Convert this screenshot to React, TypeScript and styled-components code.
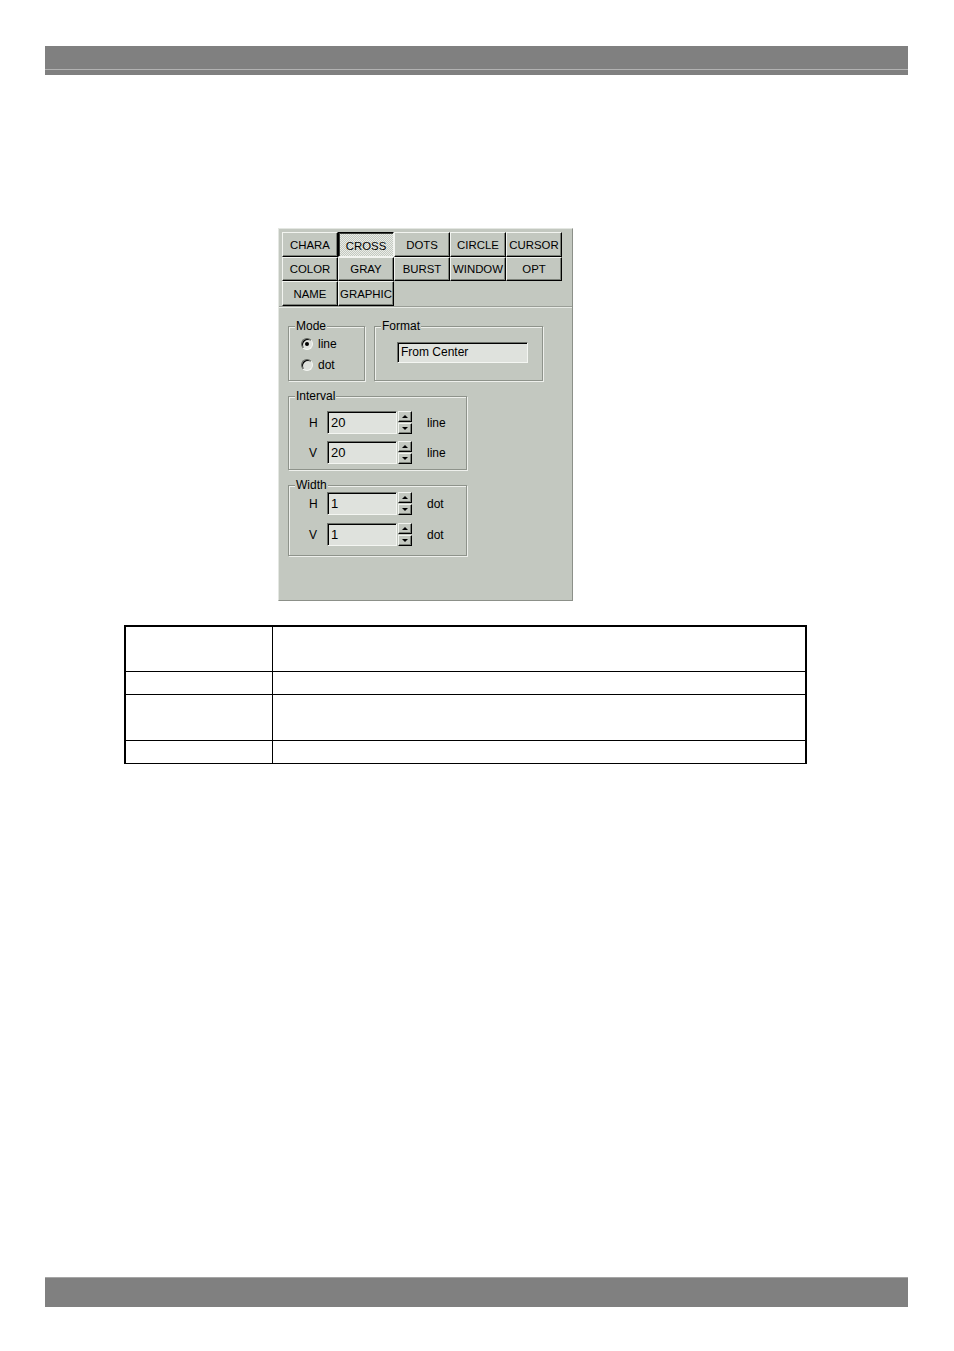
import styled, { createGlobalStyle, css } from 'styled-components';

const GlobalStyle = createGlobalStyle`
	html, body {
		margin: 0;
		padding: 0;
		background: #fff;
		font-family: "Liberation Sans", Arial, sans-serif;
	}
`;

const Page = styled.div`
	display: flex;
	flex-direction: column;
	min-height: 1351px;
	padding: 46px 0 44px;
	box-sizing: border-box;
`;

const HeaderBar = styled.div`
	margin-left: 45px;
	width: 863px;
	height: 29px;
	background: linear-gradient(#808080 0 23px, #b2b2b2 23px 24px, #808080 24px);
`;

const FooterBar = styled.div`
	margin-top: auto;
	margin-left: 45px;
	width: 863px;
	height: 30px;
	background: #808080;
	border-top: 1px solid #a6a6a6;
	box-sizing: border-box;
`;

const Panel = styled.div`
	margin: 153px 0 0 278px;
	width: 295px;
	height: 373px;
	box-sizing: border-box;
	background: #c3c8c0;
	border: 1px solid;
	border-color: #e4e7e2 #8c9089 #8c9089 #e4e7e2;
	font-size: 12px;
	color: #000;
`;

const TabArea = styled.div`
	padding: 3px 0 0 3px;
	height: 78px;
	box-sizing: border-box;
	border-bottom: 1px solid #9a9e97;
	box-shadow: 0 1px 0 #e8ebe6;
`;

const TabGrid = styled.div`
	display: grid;
	grid-template-columns: repeat(5, 56px);
	grid-template-rows: 25px 24px 25px;
`;

const Tab = styled.div<{ $active?: boolean }>`
	display: flex;
	align-items: center;
	justify-content: center;
	box-sizing: border-box;
	border: 1px solid;
	border-color: #f2f4f0 #000 #000 #f2f4f0;
	box-shadow: inset -1px -1px 0 #7c8179;
	background: #c3c8c0;
	font-size: 11.4px;
	white-space: nowrap;
	overflow: hidden;
	${({ $active }) =>
		$active &&
		css`
			border-color: #000 #f2f4f0 #f2f4f0 #000;
			box-shadow: inset 1px 1px 0 #3a3d39;
			background: repeating-conic-gradient(#c3c8c0 0 25%, #e9ece7 0 50%) 0 0 / 2px 2px;
			padding-top: 2px;
		`}
`;

const Content = styled.div`
	padding: 19px 0 0 9px;
	display: flex;
	flex-direction: column;
	gap: 15px;
`;

const Row = styled.div`
	display: flex;
	gap: 9px;
`;

const Group = styled.div<{ $w: number; $h: number }>`
	position: relative;
	width: ${({ $w }) => $w}px;
	height: ${({ $h }) => $h}px;
	box-sizing: border-box;
	border: 1px solid #8e938b;
	box-shadow: 1px 1px 0 #eef0ec, inset 1px 1px 0 #eef0ec;
`;

const Legend = styled.span`
	position: absolute;
	top: -8px;
	left: 6px;
	padding: 0 1px;
	background: #c3c8c0;
	line-height: 14px;
`;

const RadioList = styled.div`
	display: flex;
	flex-direction: column;
	gap: 7px;
	padding: 10px 0 0 12px;
`;

const RadioRow = styled.div`
	display: flex;
	align-items: center;
	gap: 5px;
	height: 14px;
`;

const RadioDot = styled.span<{ $checked?: boolean }>`
	position: relative;
	width: 12px;
	height: 12px;
	box-sizing: border-box;
	border-radius: 50%;
	border: 1px solid;
	border-color: #5f635d #f4f6f2 #f4f6f2 #5f635d;
	box-shadow: inset 1px 1px 0 #000;
	background: #dfe2dd;
	&::after {
		content: '';
		display: ${({ $checked }) => ($checked ? 'block' : 'none')};
		position: absolute;
		left: 3px;
		top: 3px;
		width: 4px;
		height: 4px;
		border-radius: 50%;
		background: #000;
	}
`;

const FormatBox = styled.div`
	margin: 15px 0 0 22px;
	width: 131px;
	height: 21px;
	box-sizing: border-box;
	border: 1px solid;
	border-color: #6c706a #f4f6f2 #f4f6f2 #6c706a;
	box-shadow: inset 1px 1px 0 #000;
	background: #dfe2dd;
	padding: 2px 0 0 3px;
	line-height: 15px;
`;

const FieldList = styled.div<{ $top: number; $gap: number }>`
	display: flex;
	flex-direction: column;
	gap: ${({ $gap }) => $gap}px;
	padding-top: ${({ $top }) => $top}px;
`;

const FieldRow = styled.div`
	display: flex;
	align-items: center;
	height: 23px;
`;

const AxisLabel = styled.span`
	width: 38px;
	padding-left: 20px;
	box-sizing: border-box;
`;

const NumberBox = styled.div`
	width: 70px;
	height: 23px;
	box-sizing: border-box;
	border: 1px solid;
	border-color: #6c706a #f4f6f2 #f4f6f2 #6c706a;
	box-shadow: inset 1px 1px 0 #000;
	background: #dfe2dd;
	padding: 3px 0 0 3px;
	font-size: 13px;
	line-height: 15px;
`;

const Spin = styled.div`
	display: flex;
	flex-direction: column;
	gap: 1px;
	margin-left: 1px;
	width: 14px;
`;

const SpinButton = styled.div<{ $down?: boolean }>`
	height: 11px;
	box-sizing: border-box;
	border: 1px solid;
	border-color: #f2f4f0 #000 #000 #f2f4f0;
	box-shadow: inset -1px -1px 0 #7c8179;
	background: #c3c8c0;
	display: flex;
	align-items: center;
	justify-content: center;
	&::after {
		content: '';
		width: 0;
		height: 0;
		border-left: 3px solid transparent;
		border-right: 3px solid transparent;
		${({ $down }) => ($down ? 'border-top: 3px solid #000;' : 'border-bottom: 3px solid #000;')}
		margin-right: 1px;
	}
`;

const Unit = styled.span`
	margin-left: 15px;
`;

const InfoTable = styled.table`
	margin: 24px 0 0 124px;
	width: 683px;
	border-collapse: collapse;
	border-top: 2px solid #000;
	border-left: 2px solid #000;
	border-right: 2px solid #000;
	border-bottom: 1px solid #000;
`;

const Cell = styled.td<{ $h: number; $first?: boolean }>`
	height: ${({ $h }) => $h}px;
	width: ${({ $first }) => ($first ? '147px' : 'auto')};
	border: 1px solid #000;
	padding: 0;
	box-sizing: border-box;
`;

const tabs: { label: string; active?: boolean }[][] = [
	[{ label: 'CHARA' }, { label: 'CROSS', active: true }, { label: 'DOTS' }, { label: 'CIRCLE' }, { label: 'CURSOR' }],
	[{ label: 'COLOR' }, { label: 'GRAY' }, { label: 'BURST' }, { label: 'WINDOW' }, { label: 'OPT' }],
	[{ label: 'NAME' }, { label: 'GRAPHIC' }],
];

const tableRows = [45, 23, 46, 23];

const NumberField = ({ axis, value, unit }: { axis: string; value: string; unit: string }) => (
	<FieldRow>
		<AxisLabel>{axis}</AxisLabel>
		<NumberBox>{value}</NumberBox>
		<Spin>
			<SpinButton />
			<SpinButton $down />
		</Spin>
		<Unit>{unit}</Unit>
	</FieldRow>
);

const App = (): React.ReactElement => {
	return (
		<>
			<GlobalStyle />
			<Page>
				<HeaderBar />
				<Panel>
					<TabArea>
						<TabGrid>
							{tabs.flat().map((t) => (
								<Tab key={t.label} $active={t.active}>
									{t.label}
								</Tab>
							))}
						</TabGrid>
					</TabArea>
					<Content>
						<Row>
							<Group $w={77} $h={55}>
								<Legend>Mode</Legend>
								<RadioList>
									<RadioRow>
										<RadioDot $checked />
										line
									</RadioRow>
									<RadioRow>
										<RadioDot />
										dot
									</RadioRow>
								</RadioList>
							</Group>
							<Group $w={169} $h={55}>
								<Legend>Format</Legend>
								<FormatBox>From Center</FormatBox>
							</Group>
						</Row>
						<Group $w={179} $h={74}>
							<Legend>Interval</Legend>
							<FieldList $top={14} $gap={7}>
								<NumberField axis="H" value="20" unit="line" />
								<NumberField axis="V" value="20" unit="line" />
							</FieldList>
						</Group>
						<Group $w={179} $h={71}>
							<Legend>Width</Legend>
							<FieldList $top={6} $gap={8}>
								<NumberField axis="H" value="1" unit="dot" />
								<NumberField axis="V" value="1" unit="dot" />
							</FieldList>
						</Group>
					</Content>
				</Panel>
				<InfoTable>
					<tbody>
						{tableRows.map((h, i) => (
							<tr key={i}>
								<Cell $h={h} $first />
								<Cell $h={h} />
							</tr>
						))}
					</tbody>
				</InfoTable>
				<FooterBar />
			</Page>
		</>
	);
};

export default App;
